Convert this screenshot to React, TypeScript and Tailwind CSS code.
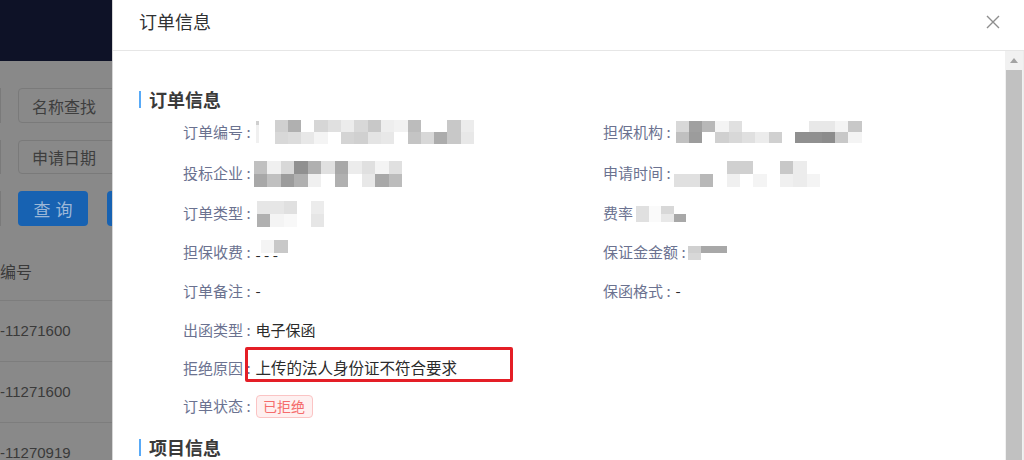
import React from 'react';

type MosaicProps = {
  rows: string[];
  w: number;
  h: number;
};

// blurred value, drawn as grey blocks
function Mosaic({ rows, w, h }: MosaicProps) {
  return (
    <div className="flex flex-col">
      {rows.map((row, i) => (
        <div key={i} className="flex">
          {row.split(' ').map((g, j) => (
            <div key={j} style={{ width: w, height: h, background: `#${g}${g}${g}` }} />
          ))}
        </div>
      ))}
    </div>
  );
}

type FieldProps = {
  label: string;
  colon?: boolean;
  gap?: string;
  children?: React.ReactNode;
};

function Field({ label, colon = true, gap = 'ml-[5px]', children }: FieldProps) {
  return (
    <div className="flex items-center">
      <span className="text-[15px] text-[#6b7290] whitespace-nowrap">
        {label}
        {colon ? ' :' : ''}
      </span>
      <div className={`${gap} flex items-center text-[15px] text-[#2b2b2b] whitespace-nowrap`}>{children}</div>
    </div>
  );
}

function SectionTitle({ title }: { title: string }) {
  return (
    <div className="flex items-center h-[24px]">
      <div className="w-[2px] h-[17px] bg-[#58aaf7]" />
      <span className="ml-[8px] text-[18px] font-bold text-[#3a3a3a]">{title}</span>
    </div>
  );
}

function BackgroundPage() {
  return (
    <div className="w-[112px] shrink-0 h-full bg-[#898989] flex flex-col overflow-hidden">
      <div className="h-[61px] shrink-0 bg-[#0e1227]" />
      <div className="flex flex-col shrink-0 gap-[17px] mt-[27px]">
        <div className="flex h-[35px]">
          <div className="w-[4px] border border-l-0 border-[#7a7a7a] rounded-r-[4px]" />
          <div className="ml-[17px] w-[110px] shrink-0 border border-[#7a7a7a] rounded-[4px] flex items-center pl-[13px] text-[16px] text-[#3e3e3e]">
            名称查找
          </div>
        </div>
        <div className="flex h-[34px]">
          <div className="w-[4px] border border-l-0 border-[#7a7a7a] rounded-r-[4px]" />
          <div className="ml-[17px] w-[110px] shrink-0 border border-[#7a7a7a] rounded-[4px] flex items-center pl-[13px] text-[16px] text-[#3e3e3e]">
            申请日期
          </div>
        </div>
        <div className="flex h-[35px]">
          <div className="w-[4px] border border-l-0 border-[#7a7a7a] rounded-r-[4px]" />
          <div className="ml-[17px] w-[70px] shrink-0 rounded-[4px] bg-[#1762b2] flex items-center justify-center text-[17px] tracking-[5px] pl-[5px] text-[#9db8d8]">
            查询
          </div>
          <div className="ml-[19px] w-[10px] shrink-0 rounded-l-[4px] bg-[#1762b2]" />
        </div>
      </div>
      <div className="mt-[15px] h-[60px] shrink-0 flex items-center border-b border-[#7d7d7d] text-[16px] text-[#3a3a3a]">
        编号
      </div>
      {['-11271600', '-11271600', '-11270919'].map((t, i) => (
        <div
          key={i}
          className="h-[61px] shrink-0 flex items-center border-b border-[#7d7d7d] text-[15px] text-[#3a3a3a] font-['Liberation_Sans',sans-serif]"
        >
          {t}
        </div>
      ))}
    </div>
  );
}

export default function App() {
  return (
    <div className="w-[1024px] h-[460px] flex overflow-hidden font-['Noto_Sans_CJK_SC','Noto_Sans',sans-serif]">
      <BackgroundPage />

      {/* dialog */}
      <div className="flex-1 h-full bg-white flex flex-col border-l border-[#d6d6d6]">
        <div className="h-[51px] shrink-0 border-b border-[#e6e6e6] flex items-start justify-between pl-[26px] pr-[24px] pt-[8px]">
          <span className="text-[18px] text-[#303133]">订单信息</span>
          <svg width="14" height="14" viewBox="0 0 14 14" className="mt-[7px]">
            <path d="M1 1L13 13M13 1L1 13" stroke="#8e8e8e" strokeWidth="1.4" />
          </svg>
        </div>

        <div className="flex-1 flex min-h-0">
          <div className="flex-1 overflow-hidden pl-[26px] pt-[36px]">
            <SectionTitle title="订单信息" />

            <div className="pl-[44px] flex flex-col">
              <div className="flex h-[42px] items-center">
                <div className="w-[420px] flex items-center">
                  <Field label="订单编号">
                    <div className="w-[3px] h-[22px] bg-[#f0f0f0] border-t-[4px] border-[#cfcfcf]" />
                    <div className="ml-[16px]">
                      <Mosaic
                        w={13.3}
                        h={12}
                        rows={['d0 b0 ff d6 e0 ec d8 c8 ee f2 bc ff ff c8 ec', 'd8 dc e8 f4 ff d4 d0 e4 e8 ff c4 d8 ac c8 e8']}
                      />
                    </div>
                  </Field>
                </div>
                <Field label="担保机构">
                  <Mosaic
                    w={13.3}
                    h={11}
                    rows={['d8 a0 b8 f4 e0 ff ff ff ff ff e8 e8 f4 c8', 'c0 9c ff d0 d8 e0 ec d0 ff 90 90 8c c8 f4']}
                  />
                </Field>
              </div>

              <div className="flex h-[41px] items-center">
                <div className="w-[420px] flex items-center">
                  <Field label="投标企业" gap="ml-[3px]">
                    <Mosaic
                      w={13.5}
                      h={13}
                      rows={['c0 f0 d8 90 b0 e0 a8 ec e0 f4 e0', 'a8 c0 9c b0 f0 ff b0 ff e8 a8 bc']}
                    />
                  </Field>
                </div>
                <Field label="申请时间" gap="ml-[3px]">
                  <Mosaic
                    w={13.3}
                    h={13}
                    rows={['ff ff ff ff d0 d0 ff ff c8 ec ff', 'e0 e0 b8 ff f0 ff f4 ff f0 ec f4']}
                  />
                </Field>
              </div>

              <div className="flex h-[39px] items-center">
                <div className="w-[420px] flex items-center">
                  <Field label="订单类型" gap="ml-[6px]">
                    <Mosaic w={13.5} h={13} rows={['e6 e6 e0 ff ec', 'b0 f4 f8 ff e6']} />
                  </Field>
                </div>
                <Field label="费率" colon={false} gap="ml-[3px]">
                  <Mosaic w={12.5} h={8} rows={['e0 fa d8 ff', 'e0 fa e8 a8']} />
                </Field>
              </div>

              <div className="flex h-[39px] items-center">
                <div className="w-[420px] flex items-center">
                  <Field label="担保收费">
                    <span className="relative leading-none pt-[4px]">
                      - - -
                      <span className="absolute left-[5px] top-[-3px]">
                        <Mosaic w={13.5} h={13} rows={['f4 c8']} />
                      </span>
                    </span>
                  </Field>
                </div>
                <Field label="保证金金额" gap="ml-[2px]">
                  <Mosaic w={13.3} h={7} rows={['d0 a8 a8', 'd8 ff ff']} />
                </Field>
              </div>

              <div className="flex h-[39px] items-center">
                <div className="w-[420px] flex items-center">
                  <Field label="订单备注">-</Field>
                </div>
                <Field label="保函格式">-</Field>
              </div>

              <div className="flex h-[38px] items-center">
                <Field label="出函类型">电子保函</Field>
              </div>

              <div className="flex h-[38px] items-center relative">
                <Field label="拒绝原因">
                  <span className="text-[15.5px]">上传的法人身份证不符合要求</span>
                </Field>
                <div className="absolute left-[62px] top-[-2px] w-[268px] h-[35px] border-[3px] border-[#e41e26] rounded-[2px]" />
              </div>

              <div className="flex h-[39px] items-center">
                <Field label="订单状态">
                  <span className="h-[23px] w-[57px] flex items-center justify-center rounded-[4px] border border-[#fbc4c4] bg-[#fef0f0] text-[14px] text-[#f56c6c]">
                    已拒绝
                  </span>
                </Field>
              </div>
            </div>

            <div className="mt-[9px]">
              <SectionTitle title="项目信息" />
            </div>
          </div>

          {/* scrollbar */}
          <div className="w-[18px] shrink-0 bg-[#f1f1f1] flex flex-col px-[1px]">
            <div className="h-[19px] flex items-center justify-center">
              <svg width="8" height="5" viewBox="0 0 8 5">
                <path d="M0 5L4 0L8 5Z" fill="#a3a3a3" />
              </svg>
            </div>
            <div className="flex-1 bg-[#c1c1c1]" />
          </div>
          <div className="w-[1px] shrink-0 bg-[#ececec]" />
        </div>
      </div>
    </div>
  );
}
